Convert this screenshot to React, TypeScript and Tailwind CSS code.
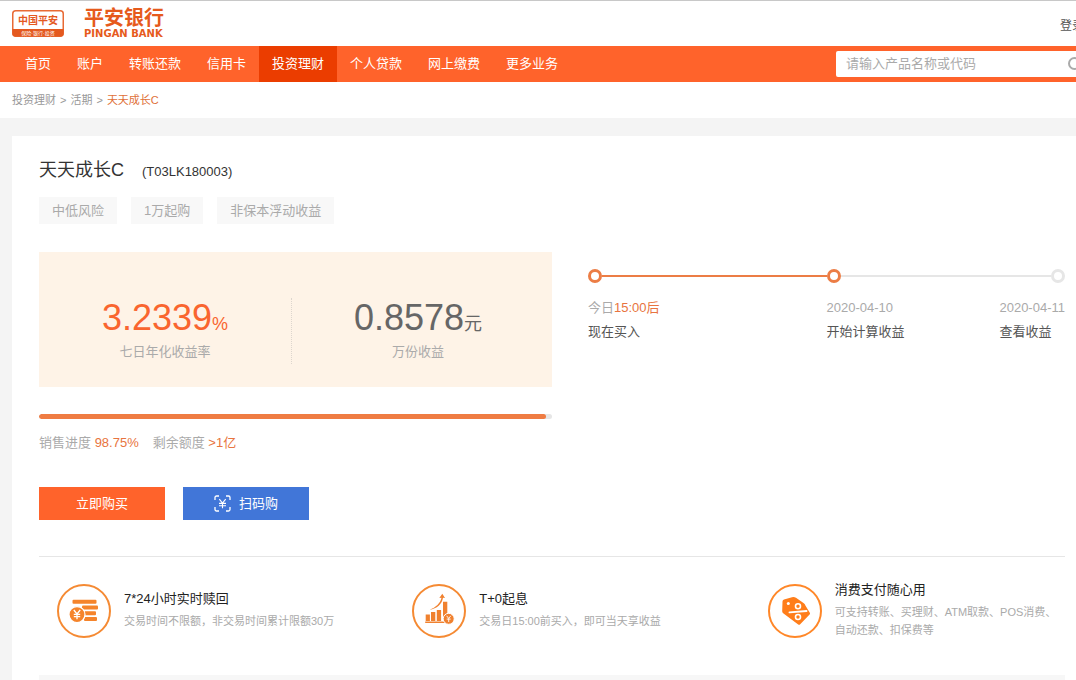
import React from 'react';

interface NavItem {
  label: string;
  active?: boolean;
}

interface Feature {
  title: string;
  text: string;
  icon: React.ReactNode;
}

const navItems: NavItem[] = [
  { label: '首页' },
  { label: '账户' },
  { label: '转账还款' },
  { label: '信用卡' },
  { label: '投资理财', active: true },
  { label: '个人贷款' },
  { label: '网上缴费' },
  { label: '更多业务' },
];

const tags = ['中低风险', '1万起购', '非保本浮动收益'];

const soldPercent = 98.75;

const Logo: React.FC = () => (
  <a href="#" className="flex items-start gap-5 text-[#e65a1c]">
    <svg viewBox="0 0 52 27" className="mt-[9px] h-[27px] w-[52px]" aria-hidden="true">
      <rect x="0.75" y="0.75" width="50.5" height="25.5" rx="3" fill="#fff" stroke="#e86a35" strokeWidth="1.5" />
      <path d="M0.5 19h51v4.5a3 3 0 0 1-3 3h-45a3 3 0 0 1-3-3z" fill="#e4591f" />
      <text x="26" y="14" textAnchor="middle" fontSize="10" fontWeight="700" fill="#e4591f">中国平安</text>
      <text x="26" y="24.6" textAnchor="middle" fontSize="5" fill="#fff">保险·银行·投资</text>
    </svg>
    <span className="flex flex-col pt-[7px]">
      <span className="text-[20px] leading-[21px] font-bold">平安银行</span>
      <span className="font-['DejaVu_Sans',sans-serif] text-[10px] leading-[10px] font-bold">PINGAN BANK</span>
    </span>
  </a>
);

const CoinsIcon: React.FC = () => (
  <svg viewBox="0 0 54 54" className="size-[54px] shrink-0" fill="none" aria-hidden="true">
    <circle cx="27" cy="27" r="26" stroke="#f58a33" strokeWidth="2" />
    <g fill="#f5842b">
      <rect x="15.500" y="15.700" width="24" height="4" rx="1" />
      <rect x="25" y="21.400" width="16" height="4.200" rx="1" />
      <rect x="27" y="27.200" width="12" height="4" rx="1" />
      <rect x="27" y="33" width="13" height="4" rx="1" />
      <circle cx="20" cy="30.600" r="8" stroke="#fff" strokeWidth="1.200" />
    </g>
    <path d="M16.800 26l3.200 4 3.200-4M20 30v5.200M16.800 30.300h6.400M16.800 32.700h6.400" stroke="#fff" strokeWidth="1.300" />
  </svg>
);

const ChartIcon: React.FC = () => (
  <svg viewBox="0 0 54 54" className="size-[54px] shrink-0" fill="none" aria-hidden="true">
    <circle cx="27" cy="27" r="26" stroke="#f58a33" strokeWidth="2" />
    <g fill="#f0812f">
      <path d="M13.700 30.500h4.200v6.500h-4.200zM19 28h4.300v9H19zM24.800 26h4.300v11h-4.300zM31 17.800h4.300V37H31zM13.200 37.600H33v1.300H13.200z" />
      <circle cx="36.700" cy="34.800" r="5.500" stroke="#fff" strokeWidth="1" />
      <path d="M27.300 14l3-4.300 2.700 4.300-2-.3c-1 6.500-6 10.800-13.500 12 6.500-2.400 10.700-6.400 12-12z" />
    </g>
    <path d="M34.600 31.800l2.100 2.600 2.100-2.600M36.700 34.400V38M34.700 35.100h4" stroke="#fff" strokeWidth="0.900" />
  </svg>
);

const DiscountIcon: React.FC = () => (
  <svg viewBox="0 0 54 54" className="size-[54px] shrink-0" fill="none" aria-hidden="true">
    <circle cx="27" cy="27" r="26" stroke="#ff8728" strokeWidth="2" />
    <path
      d="M16 15.500l8-2.300a5 5 0 0 1 4 .6l7.800 5.400a4 4 0 0 1 1.600 2.400l4.400 7.200a1.500 1.500 0 0 1-.2 1.800l-9.400 9.600a1.500 1.500 0 0 1-2 .2L15.200 29.300a2.500 2.500 0 0 1-1-2.300l.3-9.500a2.200 2.200 0 0 1 1.500-2z"
      fill="#ff7d1a"
    />
    <circle cx="20.300" cy="19.500" r="1.500" fill="#fff" />
    <path d="M21.500 28.400l17-1.400" stroke="#fff" strokeWidth="1.900" strokeLinecap="round" />
    <circle cx="30" cy="22.300" r="2.500" stroke="#fff" strokeWidth="1.600" />
    <circle cx="30" cy="33" r="2.500" stroke="#fff" strokeWidth="1.600" />
  </svg>
);

const ScanIcon: React.FC = () => (
  <svg viewBox="0 0 17 17" className="size-[17px]" fill="none" stroke="#fff" strokeWidth="1.300" aria-hidden="true">
    <path d="M1 5V2.500A1.500 1.500 0 0 1 2.500 1H5M12 1h2.500A1.500 1.500 0 0 1 16 2.500V5M16 12v2.500a1.500 1.500 0 0 1-1.500 1.500H12M5 16H2.500A1.500 1.500 0 0 1 1 14.500V12" />
    <path d="M5.300 4.200l3.200 4 3.200-4M8.500 8.200v5M5 8.400h7M5 10.800h7" strokeWidth="1.100" />
  </svg>
);

const features: Feature[] = [
  { title: '7*24小时实时赎回', text: '交易时间不限额，非交易时间累计限额30万', icon: <CoinsIcon /> },
  { title: 'T+0起息', text: '交易日15:00前买入，即可当天享收益', icon: <ChartIcon /> },
  {
    title: '消费支付随心用',
    text: '可支持转账、买理财、ATM取款、POS消费、自动还款、扣保费等',
    icon: <DiscountIcon />,
  },
];

const Dot: React.FC<{ done?: boolean }> = ({ done }) => (
  <span className={`size-3.5 shrink-0 rounded-full border-[3px] bg-white ${done ? 'border-[#ec7d45]' : 'border-[#e6e6e6]'}`} />
);

const Timeline: React.FC = () => (
  <div className="flex flex-1 pt-[17px] text-[13px] leading-6 text-[#aaa]">
    <div className="flex-1">
      <div className="flex items-center">
        <Dot done />
        <span className="h-0.5 flex-1 bg-[#ec7d45]" />
      </div>
      <p className="mt-[13px]">
        今日<span className="text-[#e87440]">15:00后</span>
      </p>
      <p className="text-[#555]">现在买入</p>
    </div>
    <div className="flex-1">
      <div className="flex items-center">
        <Dot done />
        <span className="h-0.5 flex-1 bg-[#e6e6e6]" />
        <Dot />
      </div>
      <div className="mt-[13px] flex justify-between">
        <div>
          <p>2020-04-10</p>
          <p className="text-[#555]">开始计算收益</p>
        </div>
        <div>
          <p>2020-04-11</p>
          <p className="text-[#555]">查看收益</p>
        </div>
      </div>
    </div>
  </div>
);

export default function App() {
  return (
    <div className="min-h-screen overflow-hidden bg-[#f4f4f4] font-['Liberation_Sans','Noto_Sans_CJK_SC',sans-serif] text-[13px] text-[#333]">
      {/* Header */}
      <header className="border-t border-[#c8c8c8] bg-white">
        <div className="flex h-[45px] items-start justify-between pl-3">
          <Logo />
          <a href="#" className="-mr-2 pt-4 text-xs leading-[18px] whitespace-nowrap text-[#555]">登录</a>
        </div>
      </header>

      <div className="flex h-9 items-center justify-between bg-[#ff632b] pl-3">
        <nav className="flex">
          {navItems.map((item) => (
            <a
              key={item.label}
              href="#"
              className={`h-9 px-[13px] leading-9 text-white ${item.active ? 'bg-[#eb3d00]' : ''}`}
            >
              {item.label}
            </a>
          ))}
        </nav>
        {/* The search box runs past the right edge */}
        <form className="-mr-4 flex h-[26px] w-64 items-center rounded-xs bg-white pr-2 pl-2.5">
          <input
            type="text"
            aria-label="搜索产品"
            placeholder="请输入产品名称或代码"
            className="min-w-0 flex-1 leading-5 outline-none placeholder:text-[#aaa]"
          />
          <button type="button" aria-label="搜索">
            <svg viewBox="0 0 16 16" className="size-4" fill="none" stroke="#aaa" strokeWidth="2" aria-hidden="true">
              <circle cx="6.500" cy="7.500" r="5.500" />
              <path d="M10.500 11.500l4 4" />
            </svg>
          </button>
        </form>
      </div>

      <div className="flex h-9 items-center gap-1 bg-white pl-3 text-[11px] text-[#999]">
        <a href="#">投资理财</a>
        <span>&gt;</span>
        <a href="#">活期</a>
        <span>&gt;</span>
        <span className="text-[#e07038]">天天成长C</span>
      </div>

      {/* Product card */}
      <main className="mt-[18px] ml-3 bg-white pt-[21px] pr-[11px] pl-[27px]">
        <div className="flex items-baseline gap-[18px]">
          <h1 className="text-lg leading-[26px]">天天成长C</h1>
          <span>(T03LK180003)</span>
        </div>
        <ul className="mt-[14px] flex gap-[14px] text-[#aaa]">
          {tags.map((tag) => (
            <li key={tag} className="bg-[#f8f8f8] px-[13px] leading-[27px]">{tag}</li>
          ))}
        </ul>

        <div className="mt-7 flex gap-9">
          <section className="w-1/2 shrink-0">
            <div className="flex h-[135px] bg-[#fef3e7] pt-[46px] pr-2 text-center">
              <div className="h-[66px] flex-1 border-r border-dotted border-[#ddd6ce]">
                <p className="text-4xl leading-10 text-[#f9652f]">
                  3.2339<span className="text-lg leading-none">%</span>
                </p>
                <p className="mt-1 leading-5 text-[#aaa]">七日年化收益率</p>
              </div>
              <div className="flex-1">
                <p className="text-4xl leading-10 text-[#666]">
                  0.8578<span className="text-lg leading-none">元</span>
                </p>
                <p className="mt-1 leading-5 text-[#aaa]">万份收益</p>
              </div>
            </div>
            <div className="mt-[27px] h-[5px] overflow-hidden rounded-full bg-[#e6e6e6]">
              <div className="h-full rounded-full bg-[#ef7c43]" style={{ width: `${soldPercent}%` }} />
            </div>
            <div className="mt-[14px] flex gap-[14px] leading-5 text-[#aaa]">
              <p>销售进度 <span className="text-[#e87440]">{soldPercent}%</span></p>
              <p>剩余额度 <span className="text-[#e87440]">&gt;1亿</span></p>
            </div>
            <div className="mt-[34px] flex gap-[18px] text-white">
              <button type="button" className="h-[33px] w-[126px] bg-[#ff632b]">立即购买</button>
              <button type="button" className="flex h-[33px] w-[126px] items-center justify-center gap-2 bg-[#4176d8]">
                <ScanIcon />
                扫码购
              </button>
            </div>
          </section>
          <Timeline />
        </div>

        <div className="mt-9 border-t border-[#e6e6e6] pt-5">
          <ul className="-mr-10 grid grid-cols-3">
            {features.map((feature) => (
              <li key={feature.title} className="flex items-center gap-[13px] pr-10 pl-[18px]">
                {feature.icon}
                <div className="pb-1.5">
                  <h2 className="leading-[26px] text-[#222]">{feature.title}</h2>
                  <p className="text-[11px] leading-[18px] text-[#aaa]">{feature.text}</p>
                </div>
              </li>
            ))}
          </ul>
        </div>
        <div className="mt-[30px] h-9 bg-[#f7f7f7]" />
      </main>
    </div>
  );
}
